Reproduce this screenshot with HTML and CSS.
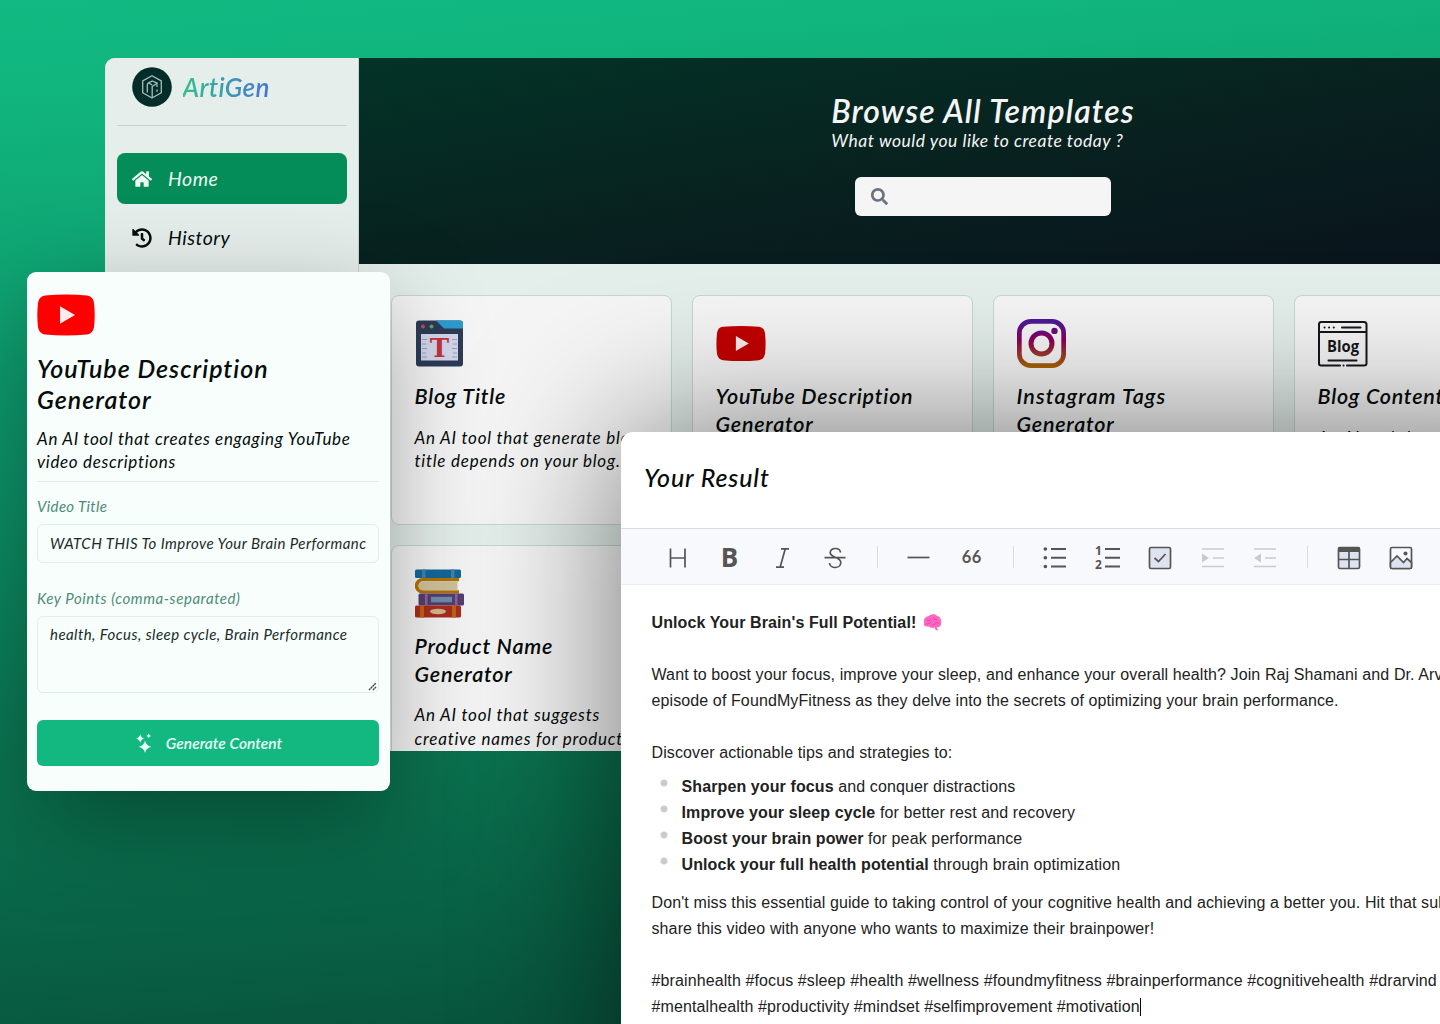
FILE: index.html
```html
<!DOCTYPE html>
<html lang="en">
<head>
<meta charset="utf-8">
<title>ArtiGen</title>
<link rel="stylesheet" href="styles.css">
</head>
<body>
<svg class="defs" width="0" height="0" aria-hidden="true">
  <defs>
    <linearGradient id="insta" x1="0" y1="0" x2="0" y2="1">
      <stop offset="0" stop-color="#471b9c"/><stop offset=".25" stop-color="#6b0c7c"/><stop offset=".45" stop-color="#8f0056"/><stop offset=".75" stop-color="#993f28"/><stop offset="1" stop-color="#a86600"/>
    </linearGradient>
    <symbol id="yt" viewBox="0 0 58 42">
      <path d="M8 1.6Q29-.4 50 1.6 56 2.200 57 9 58.400 21 57 33 56 39.800 50 40.400 29 42.400 8 40.400 2 39.800 1 33-.4 21 1 9 2 2.200 8 1.600z"/>
      <path d="M23 12.300v17.400l15-8.700z" fill="#fff" fill-opacity=".92"/>
    </symbol>
  </defs>
</svg>

<div class="window app">
  <aside class="sidebar">
    <div class="brand">
      <svg class="logo" width="40" height="40" viewBox="0 0 40 40"><circle cx="20" cy="20" r="19.800" fill="#032d29"/><g fill="none" stroke="#a9bfbe" stroke-width="1.300" stroke-linejoin="round"><path d="M20 8.700l9.300 5.200v11.900L20 31l-9.300-5.200V13.900z"/><path d="M15.300 25.500v-7.700q.2-1.500 1.700-2.200l3.300-1.600 4.900 2.200-5 3.300V30M17.300 16.300l2.900 1.700M25 17.500v2.500M25 22.500v2.200"/></g></svg>
      <span class="brand-name">ArtiGen</span>
    </div>
    <nav class="nav">
      <a class="nav-item active"><svg width="20" height="18" viewBox="0 0 576 512"><path fill="currentColor" d="M280.400 148.300L96 300.100V464a16 16 0 0 0 16 16l112-.3a16 16 0 0 0 16-16V368a16 16 0 0 1 16-16h64a16 16 0 0 1 16 16v95.600a16 16 0 0 0 16 16l112 .4a16 16 0 0 0 16-16V300L295.700 148.300a12.200 12.200 0 0 0-15.300 0zM571.600 251.500L488 182.600V44a12 12 0 0 0-12-12h-56a12 12 0 0 0-12 12v72.600L318.500 43a48 48 0 0 0-61 0L4.300 251.500a12 12 0 0 0-1.600 16.900l25.500 31a12 12 0 0 0 16.900 1.600L280.400 107.200a12.200 12.200 0 0 1 15.300 0L531 301a12 12 0 0 0 16.900-1.600l25.500-31a12 12 0 0 0-1.800-16.900z"/></svg><span>Home</span></a>
      <a class="nav-item"><svg width="20" height="20" viewBox="0 0 512 512"><path fill="currentColor" d="M504 255.500c.3 136.600-111.200 248.400-247.800 248.500-59 0-113.200-20.500-155.800-54.900-11.100-8.900-11.900-25.500-1.800-35.600l11.300-11.300c8.600-8.600 22.400-9.600 31.900-2C173.100 425.100 212.800 440 256 440c101.700 0 184-82.300 184-184 0-101.700-82.300-184-184-184-48.800 0-93.100 19-126.100 49.900l50.800 50.800c10.100 10.100 2.900 27.300-11.300 27.300H24c-8.800 0-16-7.200-16-16V38.600c0-14.300 17.200-21.400 27.300-11.300l49.400 49.400C129.200 34.100 189.600 8 256 8c136.800 0 247.700 110.800 248 247.500zM323.100 334.500l9.800-12.600c8.100-10.500 6.300-25.500-4.200-33.700L288 256.300V152c0-13.300-10.700-24-24-24h-16c-13.300 0-24 10.700-24 24v135.700l65.400 50.900c10.500 8.100 25.500 6.300 33.700-4.100z"/></svg><span>History</span></a>
    </nav>
  </aside>
  <main class="main">
    <header class="hero">
      <div class="hero-text">
        <h1>Browse All Templates</h1>
        <p>What would you like to create today ?</p>
      </div>
      <div class="search"><svg width="17" height="17" viewBox="0 0 512 512"><path fill="#6b7280" d="M505 442.700L405.300 343c-4.500-4.500-10.600-7-17-7H372c27.600-35.300 44-79.700 44-128C416 93.100 322.900 0 208 0S0 93.100 0 208s93.100 208 208 208c48.300 0 92.700-16.400 128-44v16.300c0 6.400 2.500 12.500 7 17l99.700 99.700c9.400 9.400 24.600 9.400 33.900 0l28.300-28.300c9.400-9.400 9.400-24.600.1-34zM208 336c-70.700 0-128-57.200-128-128 0-70.700 57.200-128 128-128 70.700 0 128 57.200 128 128 0 70.700-57.200 128-128 128z"/></svg></div>
    </header>
    <section class="grid">
      <article class="card">
        <svg class="card-icon" viewBox="0 0 50 50"><rect x="1" y="1.500" width="47" height="46" rx="3" fill="#2d3b57"/><path d="M21 1.500h24q3 0 3 3v5H29z" fill="#2b9ccf"/><circle cx="8" cy="7.500" r="2" fill="#c04b5b"/><circle cx="16.500" cy="7.500" r="2" fill="#63a35a"/><path d="M6 15h37v26.500H6z" fill="#d3d6ea"/><path d="M7 20.500h5M7 25h4M7 29.500h5M7 34h4M7 38h5M42 20.500h-5M42 25h-4M42 29.500h-5M42 34h-4M42 38h-5" stroke="#8fa0c8" stroke-width="1"/><text x="24.500" y="38" text-anchor="middle" class="icon-t">T</text></svg>
        <h2>Blog Title</h2>
        <p>An AI tool that generate blog<br>title depends on your blog.</p>
      </article>
      <article class="card">
        <svg class="card-icon" viewBox="0 0 50 50"><use href="#yt" x="0" y="6.500" width="50" height="36" fill="#c20000"/></svg>
        <h2>YouTube Description<br>Generator</h2>
      </article>
      <article class="card">
        <svg class="card-icon" viewBox="0 0 50 50"><path fill="url(#insta)" fill-rule="evenodd" d="M14 0h21a14 14 0 0 1 14 14v21a14 14 0 0 1-14 14H14A14 14 0 0 1 0 35V14A14 14 0 0 1 14 0zM14 4.700A9.300 9.300 0 0 0 4.700 14v21a9.300 9.300 0 0 0 9.300 9.300h21a9.300 9.300 0 0 0 9.300-9.300V14A9.300 9.300 0 0 0 35 4.700zM24.500 11.500a13 13 0 1 1 0 26 13 13 0 0 1 0-26zM24.500 16.500a8 8 0 1 0 0 16 8 8 0 0 0 0-16zM37.500 8.700a3.200 3.200 0 1 1 0 6.400 3.200 3.200 0 0 1 0-6.400z"/></svg>
        <h2><span class="wide">Instagram Tags</span><br>Generator</h2>
      </article>
      <article class="card">
        <svg class="card-icon" viewBox="0 0 50 50"><g fill="none" stroke="#17171b" stroke-width="2" stroke-linecap="round" stroke-linejoin="round"><path d="M22 46.500H3q-2 0-2-2v-39Q1 3 3 3h43q2.500 0 2.500 2.500v39q0 2-2.500 2H29M1 13h47M24 8.500h18.500M10.500 41.500h28"/><path d="M6.500 8.500h.1M11 8.500h.1M15.700 8.500h.1M25.500 46.500h.1"/></g><text x="25" y="33" text-anchor="middle" textLength="32" lengthAdjust="spacingAndGlyphs" class="icon-blog">Blog</text></svg>
        <h2>Blog Content</h2>
        <p>An AI tool that</p>
      </article>
      <article class="card">
        <svg class="card-icon" viewBox="0 0 50 50"><rect y="0.500" width="46" height="8.500" rx="1.500" fill="#15679b"/><path d="M7 .5h3.500V9H7zM36 .5h3.500V9H36z" fill="#3f86a5"/><path d="M44 9H7.500a7.700 7.700 0 0 0 0 15.500H44v-3.300H8a4.500 4.500 0 0 1 0-9h36z" fill="#b37305"/><path d="M42.500 12.200H8a4.500 4.500 0 0 0 0 9h34.500z" fill="#cfc39d"/><rect x="3.500" y="24.500" width="45.500" height="12" rx="1.500" fill="#583d70"/><path d="M10 24.500h2.500v12H10zM40 24.500h2.500v12H40z" fill="#8468a0"/><path d="M16 27.800h21v5.500H16z" fill="#6f8fac"/><rect y="36.500" width="46" height="12" rx="1.500" fill="#aa2c20"/><path d="M5 36.500h4v12H5zM37 36.500h4v12h-4z" fill="#bf6411"/><ellipse cx="23" cy="42.500" rx="8" ry="2.700" fill="#d2b88d"/></svg>
        <h2>Product Name<br>Generator</h2>
        <p>An AI tool that suggests<br>creative names for products</p>
      </article>
      <article class="card"></article>
      <article class="card"></article>
      <article class="card"></article>
    </section>
  </main>
</div>

<div class="window form">
  <svg class="form-icon" width="58" height="42"><use href="#yt" width="58" height="42" fill="#fe0000"/></svg>
  <h2>YouTube Description<br>Generator</h2>
  <p>An AI tool that creates engaging YouTube<br>video descriptions</p>
  <label>Video Title</label>
  <div class="field input">WATCH THIS To Improve Your Brain Performanc</div>
  <label class="second">Key Points (comma-separated)</label>
  <div class="field area">health, Focus, sleep cycle, Brain Performance<svg class="grip" width="9" height="9" viewBox="0 0 9 9"><path d="M1 8l7-7M5 8l3-3" stroke="#444" stroke-width="1.400" stroke-dasharray="2 .5" fill="none"/></svg></div>
  <div class="button"><svg width="17" height="20" viewBox="0 0 17 20" fill="#e9fff7"><path d="M9 7.500q.9 5 6.300 6.300Q9.900 15.100 9 20q-.9-4.900-6.300-6.200Q8.100 12.500 9 7.500zM4.200 1.200q.7 3.600 4.200 4.300-3.500.9-4.200 4.300Q3.500 6.400 0 5.500q3.500-.7 4.200-4.300zM12.700.5q.4 2 2.300 2.400-1.900.4-2.300 2.400-.4-2-2.300-2.400 1.900-.4 2.300-2.400z"/></svg><span>Generate Content</span></div>
</div>

<div class="window result">
  <h2>Your Result</h2>
  <div class="toolbar">
    <i><svg viewBox="0 0 24 24"><path d="M4.500 2.500v19M19 2.500v19M5 12h14"/></svg></i>
    <i><svg viewBox="0 0 24 24"><text x="10.500" y="21" text-anchor="middle" class="bold-b">B</text></svg></i>
    <i><svg viewBox="0 0 24 24"><path d="M10 2.800h8M5 21.200h8M14.200 3l-5 18"/></svg></i>
    <i><svg viewBox="0 0 24 24"><path d="M.5 11.700h21M16.500 6.500C16 1 6.500 1.200 6.200 6.800c-.1 4.600 10.600 4.400 10.600 9.600 0 6.700-11 6.700-11.300.6"/></svg></i>
    <b></b>
    <i><svg viewBox="0 0 24 24"><path d="M.5 11.500h22"/></svg></i>
    <i class="quote">66</i>
    <b></b>
    <i><svg viewBox="0 0 24 24"><path d="M8 3h15M8 11.700h15M8 20.500h15" stroke-width="2"/><path d="M2.300 3h.1M2.300 11.700h.1M2.300 20.500h.1" stroke-width="3.600" stroke-linecap="round"/></svg></i>
    <i><svg viewBox="0 0 24 24"><path d="M9 3h15M9 11.700h15M9 20.500h15" stroke-width="2"/><text x="-1" y="8.700" class="ol">1</text><text x="-1" y="23" class="ol">2</text></svg></i>
    <i><svg viewBox="0 0 24 24"><rect x="1.500" y="1.500" width="21" height="21" rx="1.500" fill="#dee3f0"/><path d="M6.500 12l4 3.500 7-7.500"/></svg></i>
    <i class="off"><svg viewBox="0 0 24 24"><path d="M1 3h22M12 12h11M1 20.500h22"/><path d="M1 7.500v9l7-4.500z"/></svg></i>
    <i class="off"><svg viewBox="0 0 24 24"><path d="M1 3h22M12 12h11M1 20.500h22"/><path d="M8 7.500v9L1 12z"/></svg></i>
    <b></b>
    <i><svg viewBox="0 0 24 24"><rect x="1.500" y="1.500" width="21" height="21" rx="1.500" fill="#dee3f0"/><path d="M1.500 3.500h21M12 4v18.500M1.500 13.500h21" /><path d="M1 1.500h22V6H1z" fill="#555" stroke="none"/></svg></i>
    <i><svg viewBox="0 0 24 24"><rect x="1.500" y="1.500" width="21" height="21" rx="1.500"/><path d="M2 16l6-6 6 6.500 4-4 4.500 4.500v5H2z" fill="#dee3f0" stroke="none"/><path d="M2 16l6-6 6.500 6.500 3.500-4 4.500 4M1.500 16v5q0 1.500 1.500 1.500h18q1.500 0 1.500-1.500v-5"/><circle cx="16.500" cy="7.500" r="2" fill="#555" stroke="none"/></svg></i>
  </div>
  <div class="doc">
    <p><strong>Unlock Your Brain's Full Potential!</strong><svg class="brain" width="19" height="18" viewBox="0 0 19 18"><path d="M1 9C0 5 3 2 6 2c2-2.500 7-2 8 0 3 0 5 4 4 7 .5 3-2 4.500-4 4.300l1 3.500-2.500-1-1-2.300C8 14.500 6 13 6 12.500 2 13 .5 11.500 1 9z" fill="#ff67c0"/><path d="M4 6.500q3 1 4.500-2M10 3q0 3 4 3M3 10q4 .5 5.500-2.500M9 11q3 .5 4-2.500l3 1" fill="none" stroke="#ec2f9d" stroke-width=".7"/></svg></p>
    <p>Want to boost your focus, improve your sleep, and enhance your overall health? Join Raj Shamani and Dr. Arvind<br>episode of FoundMyFitness as they delve into the secrets of optimizing your brain performance.</p>
    <p class="lead">Discover actionable tips and strategies to:</p>
    <ul>
      <li><strong>Sharpen your focus</strong> and conquer distractions</li>
      <li><strong>Improve your sleep cycle</strong> for better rest and recovery</li>
      <li><strong>Boost your brain power</strong> for peak performance</li>
      <li><strong>Unlock your full health potential</strong> through brain optimization</li>
    </ul>
    <p>Don't miss this essential guide to taking control of your cognitive health and achieving a better you. Hit that subscribe<br>share this video with anyone who wants to maximize their brainpower!</p>
    <p>#brainhealth #focus #sleep #health #wellness #foundmyfitness #brainperformance #cognitivehealth #drarvind<br>#mentalhealth #productivity #mindset #selfimprovement #motivation<span class="caret"></span></p>
  </div>
</div>
</body>
</html>
```
FILE: styles.css
```css
* { box-sizing: border-box; }
html, body { height: 100%; }
body {
  margin: 0;
  position: relative;
  overflow: hidden;
  background: linear-gradient(175deg, #11ba82 0%, #11b57e 8%, #0d9468 40%, #0a6d4c 73%, #074c37 100%);
  font-family: Lato, "Open Sans", sans-serif;
  font-style: italic;
  color: #050c0b;
}
h1, h2, p, ul { margin: 0; padding: 0; }
h1, h2, p, label, .field { white-space: nowrap; }
.defs { position: absolute; }
.window { position: absolute; overflow: hidden; }

/* Template browser */
.app {
  left: 105px; top: 58px; width: 1502px; height: 693px;
  display: flex;
  border-radius: 10px 0 0 0;
  background: #e4eeea;
}
.sidebar {
  width: 254px;
  padding: 9px 11px 0 11.500px;
  border-right: 1px solid #c3d3ce;
  background: #e6eeeb;
}
.brand {
  height: 59px;
  display: flex; align-items: flex-start; gap: 10.500px;
  padding-left: 15.500px;
  border-bottom: 1px solid #bfd1cb;
}
.brand-name {
  font-size: 26px; line-height: 40px; font-weight: 600; letter-spacing: .3px;
  background: linear-gradient(90deg, #34c08b, #4675d2);
  -webkit-background-clip: text; background-clip: text;
  color: transparent;
}
.nav { margin-top: 27px; display: flex; flex-direction: column; gap: 8px; }
.nav-item {
  height: 51px; padding-left: 15px;
  display: flex; align-items: center; gap: 16.500px;
  border-radius: 8px;
  font-size: 19.500px; letter-spacing: .5px;
}
.nav-item.active { background: #048c59; color: #effaf5; }
.main { flex: 1; }
.hero {
  height: 206px; padding-top: 35px;
  display: flex; flex-direction: column; align-items: center;
  background: linear-gradient(170deg, #033327 0%, #08211f 50%, #0a121c 100%);
  color: #f5f5f5;
}
.hero h1 { font-size: 32px; line-height: 36px; font-weight: 600; letter-spacing: 1.100px; }
.hero p { margin-top: 1px; font-size: 17.500px; line-height: 22px; letter-spacing: .52px; }
.search {
  width: 256px; height: 39px; margin-top: 25px; padding-left: 15.500px;
  display: flex; align-items: center;
  border-radius: 6px; background: #f5f5f5;
}
.grid {
  padding: 31px 32px 31px 31.500px;
  display: grid; grid-template-columns: repeat(4, 281px); grid-auto-rows: 230px; gap: 20px;
}
.card {
  padding: 23px;
  border: 1px solid #c3d8d0; border-radius: 8px;
  background: #f5f5f5;
}
.card-icon { display: block; width: 50px; height: 50px; }
.card h2 { margin-top: 14px; font-size: 21.500px; line-height: 27.500px; font-weight: 600; letter-spacing: .78px; }
.card h2 .wide { letter-spacing: 1.100px; }
.card p { margin-top: 15px; font-size: 17px; line-height: 23.500px; letter-spacing: .77px; }
.icon-t { font: bold 26px "DejaVu Serif", serif; fill: #c0353f; }
.icon-blog { font: bold 16px "Open Sans", sans-serif; fill: #17171b; }

/* Generator form */
.form {
  left: 27px; top: 272px; width: 363px; height: 519px;
  padding: 22px 11px 0 10px;
  border-radius: 9px;
  background: #f7fefc;
  box-shadow: 0 30px 100px -5px rgba(0, 0, 0, .36);
}
.form-icon { display: block; }
.form h2 { margin-top: 17px; font-size: 25px; line-height: 31px; font-weight: 600; letter-spacing: .99px; }
.form p {
  margin-top: 12px; padding-bottom: 8px;
  border-bottom: 1px solid #e3ecea;
  font-size: 17px; line-height: 23px; letter-spacing: .67px;
}
.form label { display: block; height: 42px; padding-top: 14px; font-size: 15px; line-height: 20px; letter-spacing: .35px; color: #4d8c76; }
.form label.second { height: 53px; padding-top: 25px; letter-spacing: .56px; }
.field {
  display: flex;
  border: 1px solid #e1eeea; border-radius: 6px;
  font-size: 15px; line-height: 20px; letter-spacing: .445px; color: #1b2b28;
  padding-left: 12px;
}
.input { height: 39px; padding-top: 8px; }
.area { height: 77px; padding-top: 6.500px; padding-right: 1px; justify-content: space-between; }
.grip { align-self: flex-end; margin-bottom: 1px; }
.button {
  height: 46px; margin-top: 27px; padding-left: 2px;
  display: flex; align-items: center; justify-content: center; gap: 13px;
  border-radius: 6px; background: #12b880; color: #e9fff7;
  font-size: 15.500px; font-weight: 600; letter-spacing: .06px;
}

/* Result editor */
.result {
  left: 621px; top: 432px; width: 986px; height: 700px;
  border-radius: 12px 0 0 0;
  background: #fff;
  box-shadow: 0 0 150px rgba(0, 0, 0, .54);
}
.result h2 { height: 96px; padding: 29px 0 0 23px; font-size: 25px; line-height: 32px; font-weight: 500; letter-spacing: .85px; }
.toolbar {
  height: 57px; padding-left: 31px;
  display: flex; align-items: center;
  border-top: 1px solid #d9dce5; border-bottom: 1px solid #ebedf2;
  background: #f7f9fc;
}
.toolbar i { width: 52.500px; display: flex; justify-content: center; font-style: normal; }
.toolbar svg { display: block; width: 24px; height: 24px; margin-top: 2px; overflow: visible; fill: none; stroke: #555; stroke-width: 1.700; }
.toolbar b { width: 31px; height: 22px; display: flex; justify-content: center; }
.toolbar b::before { content: ""; width: 1px; background: #d9dde3; }
.toolbar .off svg { stroke: #c9cacd; }
.toolbar .off path + path { fill: #c9cacd; stroke: none; }
.toolbar text { fill: #555; stroke: none; }
.bold-b { font: bold 26px "Open Sans", sans-serif; }
.ol { font: bold 12px "Open Sans", sans-serif; }
.quote { font: bold 16.500px/24px Lato, sans-serif; letter-spacing: .5px; color: #555; }
.doc {
  padding: 25px 0 0 30.500px;
  font: normal 16px/26px "Liberation Sans", Arial, sans-serif;
  letter-spacing: .11px;
  color: #222; white-space: nowrap;
}
.doc p { margin-bottom: 26px; }
.doc p.lead { margin-bottom: 8px; }
.doc ul { list-style: none; margin-bottom: 12px; }
.doc li { padding-left: 30px; background: radial-gradient(circle at 12px 9px, #ccc 3px, transparent 4px); }
.brain { margin-left: 7px; vertical-align: -4px; }
.caret { display: inline-block; width: 1px; height: 18px; background: #000; vertical-align: -4px; }
```
